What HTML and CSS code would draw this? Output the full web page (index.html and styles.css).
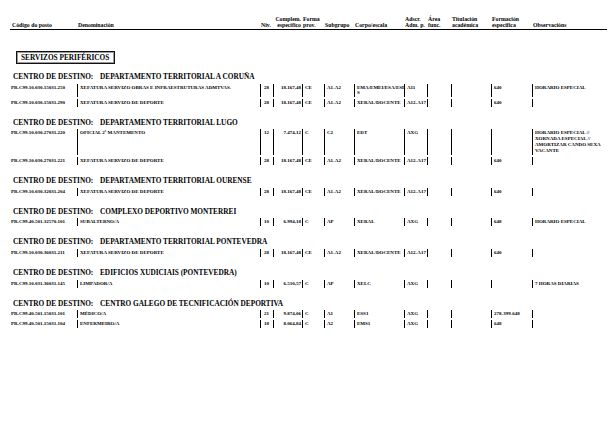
FILE: index.html
```html
<!DOCTYPE html>
<html lang="gl">
<head>
<meta charset="utf-8">
<title>Servizos periféricos</title>
<link rel="stylesheet" href="styles.css">
</head>
<body>
<div class="page">
  <div class="head">
    <div class="hc">Código do posto</div>
    <div class="hc">Denominación</div>
    <div class="hc">Niv.</div>
    <div class="hc right">Complem.<br>especifico</div>
    <div class="hc">Forma<br>prov.</div>
    <div class="hc">Subgrupo</div>
    <div class="hc">Corpo/escala</div>
    <div class="hc">Adscr.<br>Adm. p.</div>
    <div class="hc">Área<br>func.</div>
    <div class="hc">Titulación<br>académica</div>
    <div class="hc">Formación<br>especifica</div>
    <div class="hc">Observacións</div>
  </div>

  <div class="box">SERVIZOS PERIFÉRICOS</div>

  <div class="section first">
    <div class="sec-title"><span class="label">CENTRO DE DESTINO:</span><span>DEPARTAMENTO TERRITORIAL A CORUÑA</span></div>
    <div class="row">
      <div class="code">PR.C99.10.030.15031.250</div>
      <div class="c">XEFATURA SERVIZO OBRAS E INFRAESTRUTURAS ADMTVAS.</div>
      <div class="c niv">28</div>
      <div class="c num">18.167,48</div>
      <div class="c">CE</div>
      <div class="c">A1-A2</div>
      <div class="c wrap2">EMA/EMEI/ESA/ESE<br>S</div>
      <div class="c">A11</div>
      <div class="c"></div>
      <div class="c"></div>
      <div class="c">640</div>
      <div class="c">HORARIO ESPECIAL</div>
    </div>
    <div class="row">
      <div class="code">PR.C99.10.030.15031.290</div>
      <div class="c">XEFATURA SERVIZO DE DEPORTE</div>
      <div class="c niv">28</div>
      <div class="c num">18.167,48</div>
      <div class="c">CE</div>
      <div class="c">A1-A2</div>
      <div class="c">XERAL/DOCENTE</div>
      <div class="c">A12-A17</div>
      <div class="c"></div>
      <div class="c"></div>
      <div class="c">640</div>
      <div class="c"></div>
    </div>
  </div>

  <div class="section">
    <div class="sec-title"><span class="label">CENTRO DE DESTINO:</span><span>DEPARTAMENTO TERRITORIAL LUGO</span></div>
    <div class="row">
      <div class="code">PR.C99.10.030.27031.220</div>
      <div class="c">OFICIAL 2ª MANTEMENTO</div>
      <div class="c niv">12</div>
      <div class="c num">7.474,12</div>
      <div class="c">C</div>
      <div class="c">C2</div>
      <div class="c">EDT</div>
      <div class="c">AXG</div>
      <div class="c"></div>
      <div class="c"></div>
      <div class="c"></div>
      <div class="c">HORARIO ESPECIAL //<br>XORNADA ESPECIAL //<br>AMORTIZAR CANDO SEXA<br>VACANTE</div>
    </div>
    <div class="row">
      <div class="code">PR.C99.10.030.27031.221</div>
      <div class="c">XEFATURA SERVIZO DE DEPORTE</div>
      <div class="c niv">28</div>
      <div class="c num">18.167,48</div>
      <div class="c">CE</div>
      <div class="c">A1-A2</div>
      <div class="c">XERAL/DOCENTE</div>
      <div class="c">A12-A17</div>
      <div class="c"></div>
      <div class="c"></div>
      <div class="c">640</div>
      <div class="c"></div>
    </div>
  </div>

  <div class="section">
    <div class="sec-title"><span class="label">CENTRO DE DESTINO:</span><span>DEPARTAMENTO TERRITORIAL OURENSE</span></div>
    <div class="row">
      <div class="code">PR.C99.10.030.32031.204</div>
      <div class="c">XEFATURA SERVIZO DE DEPORTE</div>
      <div class="c niv">28</div>
      <div class="c num">18.167,48</div>
      <div class="c">CE</div>
      <div class="c">A1-A2</div>
      <div class="c">XERAL/DOCENTE</div>
      <div class="c">A12-A17</div>
      <div class="c"></div>
      <div class="c"></div>
      <div class="c">640</div>
      <div class="c"></div>
    </div>
  </div>

  <div class="section">
    <div class="sec-title"><span class="label">CENTRO DE DESTINO:</span><span>COMPLEXO DEPORTIVO MONTERREI</span></div>
    <div class="row">
      <div class="code">PR.C99.40.501.32570.101</div>
      <div class="c">SUBALTERNO/A</div>
      <div class="c niv">10</div>
      <div class="c num">6.994,18</div>
      <div class="c">C</div>
      <div class="c">AP</div>
      <div class="c">XERAL</div>
      <div class="c">AXG</div>
      <div class="c"></div>
      <div class="c"></div>
      <div class="c">648</div>
      <div class="c">HORARIO ESPECIAL</div>
    </div>
  </div>

  <div class="section">
    <div class="sec-title"><span class="label">CENTRO DE DESTINO:</span><span>DEPARTAMENTO TERRITORIAL PONTEVEDRA</span></div>
    <div class="row">
      <div class="code">PR.C99.10.030.36031.211</div>
      <div class="c">XEFATURA SERVIZO DE DEPORTE</div>
      <div class="c niv">28</div>
      <div class="c num">18.167,48</div>
      <div class="c">CE</div>
      <div class="c">A1-A2</div>
      <div class="c">XERAL/DOCENTE</div>
      <div class="c">A12-A17</div>
      <div class="c"></div>
      <div class="c"></div>
      <div class="c">640</div>
      <div class="c"></div>
    </div>
  </div>

  <div class="section">
    <div class="sec-title"><span class="label">CENTRO DE DESTINO:</span><span>EDIFICIOS XUDICIAIS (PONTEVEDRA)</span></div>
    <div class="row">
      <div class="code">PR.C99.10.031.36031.145</div>
      <div class="c">LIMPADOR/A</div>
      <div class="c niv">10</div>
      <div class="c num">6.510,57</div>
      <div class="c">C</div>
      <div class="c">AP</div>
      <div class="c">XELC</div>
      <div class="c">AXG</div>
      <div class="c"></div>
      <div class="c"></div>
      <div class="c"></div>
      <div class="c">7 HORAS DIARIAS</div>
    </div>
  </div>

  <div class="section">
    <div class="sec-title"><span class="label">CENTRO DE DESTINO:</span><span>CENTRO GALEGO DE TECNIFICACIÓN DEPORTIVA</span></div>
    <div class="row tight">
      <div class="code">PR.C99.40.501.15031.101</div>
      <div class="c">MÉDICO/A</div>
      <div class="c niv">21</div>
      <div class="c num">9.874,06</div>
      <div class="c">C</div>
      <div class="c">A1</div>
      <div class="c">ESS1</div>
      <div class="c">AXG</div>
      <div class="c"></div>
      <div class="c"></div>
      <div class="c">278-399-648</div>
      <div class="c"></div>
    </div>
    <div class="row tight">
      <div class="code">PR.C99.40.501.15031.104</div>
      <div class="c">ENFERMEIRO/A</div>
      <div class="c niv">18</div>
      <div class="c num">8.064,84</div>
      <div class="c">C</div>
      <div class="c">A2</div>
      <div class="c">EMS1</div>
      <div class="c">AXG</div>
      <div class="c"></div>
      <div class="c"></div>
      <div class="c">648</div>
      <div class="c"></div>
    </div>
  </div>
</div>
</body>
</html>
```
FILE: styles.css
```css
html, body {
  margin: 0;
  padding: 0;
  background: #fff;
}

body {
  width: 615px;
  height: 439px;
  overflow: hidden;
  font-family: "Liberation Serif", "Times New Roman", serif;
  font-weight: bold;
  color: #000;
}

.page {
  padding: 16px 0 0 11px;
}

.head,
.row {
  display: grid;
  grid-template-columns: 66px 183px 13px 29px 22px 30px 50px 23px 24px 40px 41px 70px;
}

.head {
  width: 596px;
  margin-left: -1px;
  padding-left: 1px;
  padding-bottom: 1px;
  border-bottom: 1px solid #000;
  align-items: end;
}

.hc {
  font-size: 5.8px;
  line-height: 6px;
  white-space: nowrap;
  padding-left: 1px;
}

.hc.right {
  text-align: right;
  padding-right: 1px;
}

.box {
  display: inline-block;
  margin: 21px 0 0 5px;
  padding: 2px 4px 1px 4px;
  width: 89px;
  font-size: 7.3px;
  line-height: 8px;
  border: 1px solid #111;
  box-shadow: inset 0 0 0 1px #9a9a9a;
}

.section {
  margin-top: 11px;
}

.section.first {
  margin-top: 8px;
}

.sec-title {
  display: flex;
  font-size: 7.3px;
  line-height: 9px;
  padding-left: 2px;
  margin-bottom: 2.6px;
  white-space: nowrap;
}

.sec-title .label {
  width: 87px;
}

.row {
  margin-bottom: 2px;
  font-size: 5px;
  line-height: 6px;
}

.row.tight {
  margin-bottom: 1.5px;
}

.code {
  padding: 1px 0;
  white-space: nowrap;
}

.c {
  border-left: 1px solid #000;
  padding: 1px 1px 1px 2px;
  white-space: nowrap;
}

.c.wrap2 {
  line-height: 5.5px;
}

.c.niv {
  padding-left: 3px;
}

.c.num {
  text-align: right;
  padding-right: 1px;
}
```
